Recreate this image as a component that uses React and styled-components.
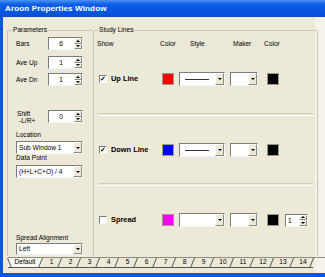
import React from "react"
import styled, { createGlobalStyle } from "styled-components"

const GlobalStyle = createGlobalStyle`
  html, body {
    margin: 0;
    padding: 0;
    background: #fff;
  }
  body {
    font-family: "Liberation Sans", Arial, sans-serif;
    color: #000;
  }
`

const Window = styled.div`
  width: 325px;
  height: 277px;
  display: flex;
  flex-direction: column;
  overflow: hidden;
`

const TitleBar = styled.div`
  height: 17px;
  flex: none;
  display: flex;
  align-items: center;
  padding-left: 5px;
  background: linear-gradient(#4a94f8 0%, #0f5fe6 25%, #0856e2 70%, #0a4dd2 100%);
  color: #fff;
  font-weight: bold;
  font-size: 8.1px;
  letter-spacing: 0.1px;
`

const Body = styled.div`
  flex: 1;
  display: flex;
  flex-direction: column;
  padding: 13px 0 0 4px;
  background: linear-gradient(to right, #ece9d8 312px, #f4f2ea 312px);
  border-left: 3px solid #0b55e0;
  border-bottom: 4px solid #0b55e0;
`

const Panels = styled.div`
  display: flex;
  height: 226px;
`

const Group = styled.div`
  position: relative;
  width: ${(p) => p.$w}px;
  display: flex;
  flex-direction: column;
  border-top: 1px solid #c9c6b4;
  border-left: 1px solid #c9c6b4;
  border-right: ${(p) => (p.$right ? "1px solid #c9c6b4" : "none")};
  border-radius: 2px 2px 0 0;
`

const Legend = styled.span`
  position: absolute;
  top: -5px;
  left: ${(p) => p.$x}px;
  padding: 0 1px;
  background: #ece9d8;
  font-size: 6.6px;
  line-height: 8px;
`

const Label = styled.div`
  font-size: 6.6px;
  line-height: 8px;
  margin-top: ${(p) => p.$top || 0}px;
  margin-left: 8px;
`

const ParamRow = styled.div`
  display: flex;
  align-items: center;
  margin-top: ${(p) => p.$top}px;
  margin-left: 8px;
  height: 13px;
`

const ParamName = styled.div`
  width: 32px;
  font-size: 6.6px;
  line-height: 7px;
`

const ShiftLine = styled.div`
  padding-left: ${(p) => p.$indent}px;
`

const SunkenBox = styled.div`
  display: flex;
  width: ${(p) => p.$w}px;
  height: ${(p) => p.$h}px;
  background: #fff;
  border: 1px solid;
  border-color: #7c7c7c #f4f4f4 #f4f4f4 #7c7c7c;
  box-sizing: border-box;
  margin-top: ${(p) => p.$top || 0}px;
  margin-left: ${(p) => p.$left || 0}px;
`

const BoxText = styled.div`
  flex: 1;
  font-size: 6.6px;
  line-height: ${(p) => p.$h}px;
  text-align: ${(p) => p.$align || "left"};
  padding: 0 ${(p) => (p.$align === "right" ? 11 : 1)}px 0 2px;
  white-space: nowrap;
  overflow: hidden;
`

const SpinButtons = styled.div`
  width: 8px;
  display: flex;
  flex-direction: column;
`

const SpinHalf = styled.div`
  flex: 1;
  display: flex;
  align-items: center;
  justify-content: center;
  background: #ece9d8;
  border: 1px solid;
  border-color: #fff #8c8a7e #8c8a7e #fff;
  box-sizing: border-box;
  &::after {
    content: "";
    border-left: 2px solid transparent;
    border-right: 2px solid transparent;
    ${(p) => (p.$up ? "border-bottom: 2px solid #000;" : "border-top: 2px solid #000;")}
  }
`

const DropButton = styled.div`
  width: 9px;
  display: flex;
  align-items: center;
  justify-content: center;
  background: #ece9d8;
  border: 1px solid;
  border-color: #fff #8c8a7e #8c8a7e #fff;
  box-sizing: border-box;
  &::after {
    content: "";
    border-left: 2px solid transparent;
    border-right: 2px solid transparent;
    border-top: 2px solid #000;
  }
`

const LineSample = styled.div`
  flex: 1;
  display: flex;
  align-items: center;
  padding: 0 6px 0 5px;
  &::after {
    content: "";
    flex: 1;
    height: 1px;
    background: #333;
  }
`

const Header = styled.div`
  display: flex;
  margin-top: 9px;
  font-size: 6.6px;
  line-height: 8px;
`

const HeadCell = styled.div`
  width: ${(p) => p.$w}px;
  margin-left: ${(p) => p.$left || 0}px;
`

const LineRow = styled.div`
  display: flex;
  align-items: center;
  height: 14px;
  margin-top: ${(p) => p.$top}px;
`

const Check = styled.div`
  width: 8px;
  height: 8px;
  margin-left: 5px;
  box-sizing: border-box;
  background: #fff;
  border: 1px solid;
  border-color: #7c7c7c #f4f4f4 #f4f4f4 #7c7c7c;
  display: flex;
  align-items: center;
  justify-content: center;
  font-size: 7px;
  line-height: 6px;
  font-weight: bold;
`

const LineName = styled.div`
  width: 51px;
  margin-left: 4px;
  font-size: 7.4px;
  font-weight: bold;
  line-height: 8px;
`

const Swatch = styled.div`
  width: 12px;
  height: 12px;
  box-sizing: border-box;
  background: ${(p) => p.$color};
  border: 1px solid #9a9886;
  margin-left: ${(p) => p.$left || 0}px;
`

const Separator = styled.div`
  height: 1px;
  margin: ${(p) => p.$top}px 4px 0 4px;
  border-top: 1px solid #cfccbb;
  border-bottom: 1px solid #fff;
`

const TabStrip = styled.div`
  display: flex;
  margin: 1px 0 0 1px;
  height: 10px;
  border-top: 1px solid #8e8c80;
`

const Tab = styled.div`
  position: relative;
  width: ${(p) => p.$w}px;
  flex: none;
  box-sizing: border-box;
  text-align: center;
  font-size: 6.6px;
  line-height: 8px;
  border-bottom: 1px solid #555;
  background: ${(p) => (p.$active ? "#f6f5ee" : "transparent")};
  &::after {
    content: "";
    position: absolute;
    right: 1px;
    top: 0;
    bottom: -1px;
    width: 1px;
    background: #555;
    transform: skewX(-22deg);
  }
  ${(p) =>
    p.$first &&
    `&::before {
      content: "";
      position: absolute;
      left: 1px;
      top: 0;
      bottom: -1px;
      width: 1px;
      background: #555;
      transform: skewX(22deg);
    }`}
`

function Spinner({ value, w = 35, h = 13, align = "right", left, top }) {
  return (
    <SunkenBox $w={w} $h={h} $left={left} $top={top}>
      <BoxText $h={h - 2} $align={align}>
        {value}
      </BoxText>
      <SpinButtons>
        <SpinHalf $up />
        <SpinHalf />
      </SpinButtons>
    </SunkenBox>
  )
}

function Combo({ text, w, h = 13, top, left, line }) {
  return (
    <SunkenBox $w={w} $h={h} $top={top} $left={left}>
      {line ? <LineSample /> : <BoxText $h={h - 2}>{text}</BoxText>}
      <DropButton />
    </SunkenBox>
  )
}

function StudyLine({ top, name, checked, color, line, spread }) {
  return (
    <LineRow $top={top}>
      <Check>{checked ? "✓" : ""}</Check>
      <LineName>{name}</LineName>
      <Swatch $color={color} />
      <Combo w={46} h={14} left={5} line={line} />
      <Combo w={28} h={14} left={5} />
      <Swatch $color="#000" $left={9} />
      {spread && <Spinner value="1" w={23} h={13} align="left" left={6} />}
    </LineRow>
  )
}

const tabs = ["1", "2", "3", "4", "5", "6", "7", "8", "9", "10", "11", "12", "13", "14"]

export default function App() {
  return (
    <>
      <GlobalStyle />
      <Window>
        <TitleBar>Aroon Properties Window</TitleBar>
        <Body>
          <Panels>
            <Group $w={85}>
              <Legend $x={4}>Parameters</Legend>
              <ParamRow $top={6}>
                <ParamName>Bars</ParamName>
                <Spinner value="6" />
              </ParamRow>
              <ParamRow $top={6}>
                <ParamName>Ave Up</ParamName>
                <Spinner value="1" />
              </ParamRow>
              <ParamRow $top={4}>
                <ParamName>Ave Dn</ParamName>
                <Spinner value="1" />
              </ParamRow>
              <ParamRow $top={24}>
                <ParamName>
                  <ShiftLine $indent={1}>Shift</ShiftLine>
                  <ShiftLine $indent={3}>-L/R+</ShiftLine>
                </ParamName>
                <Spinner value="0" />
              </ParamRow>
              <Label $top={8}>Location</Label>
              <Combo text="Sub Window 1" w={67} top={2} left={8} />
              <Label>Data Point</Label>
              <Combo text="(H+L+C+O) / 4" w={67} top={3} left={8} />
              <Label $top={56}>Spread Alignment</Label>
              <Combo text="Left" w={67} h={12} top={1} left={8} />
            </Group>
            <Group $w={223} $right>
              <Legend $x={4}>Study Lines</Legend>
              <Header>
                <HeadCell $w={63} $left={3}>Show</HeadCell>
                <HeadCell $w={30}>Color</HeadCell>
                <HeadCell $w={43}>Style</HeadCell>
                <HeadCell $w={31}>Maker</HeadCell>
                <HeadCell $w={30}>Color</HeadCell>
              </Header>
              <StudyLine top={24} name="Up Line" checked color="#ff0000" line />
              <Separator $top={27} />
              <StudyLine top={27} name="Down Line" checked color="#0000ff" line />
              <Separator $top={26} />
              <StudyLine top={27} name="Spread" color="#ff00ff" spread />
            </Group>
          </Panels>
          <TabStrip>
            <Tab $w={34} $first $active>Default</Tab>
            {tabs.map((t) => (
              <Tab key={t} $w={t.length > 1 ? 20 : 19}>
                {t}
              </Tab>
            ))}
          </TabStrip>
        </Body>
      </Window>
    </>
  )
}
